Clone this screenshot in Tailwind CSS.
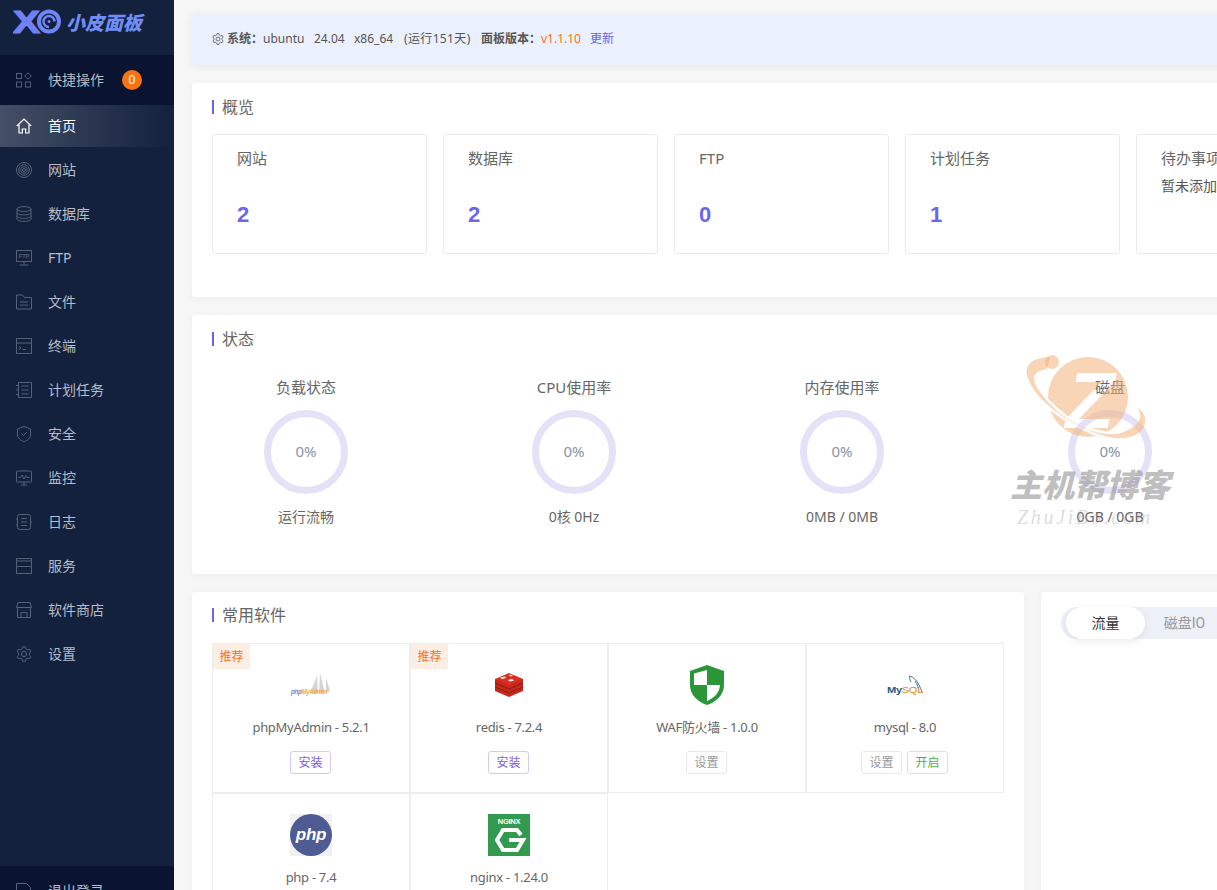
<!DOCTYPE html>
<html lang="zh-CN">
<head>
    <meta charset="UTF-8">
    <meta name="viewport" content="width=device-width, initial-scale=1.0">
    <title>小皮面板</title>
    <script src="https://cdn.jsdelivr.net/npm/@tailwindcss/browser@4"></script>
</head>
<body class="bg-[#f6f6f7] font-['Noto_Sans','Noto_Sans_CJK_SC',sans-serif]">
<div class="relative flex h-[890px] w-[1217px] overflow-hidden">

    <!-- sidebar -->
    <aside class="flex h-[916px] w-[174px] shrink-0 flex-col bg-[#14213d] text-sm text-[#b4bdc9]">
        <div class="flex h-[55px] items-start pl-[13px] pt-[9px]">
            <svg width="49" height="26" viewBox="0 0 49 26" fill="none">
                <defs><linearGradient id="logoGrad" x1="0" y1="0" x2="1" y2="0"><stop offset="0" stop-color="#6d86f8"/><stop offset="1" stop-color="#6f7cf6"/></linearGradient></defs>
                <text x="0" y="24" font-size="32" font-weight="700" fill="url(#logoGrad)" stroke="#6d84f7" stroke-width="1.200" font-family="Liberation Sans" textLength="27" lengthAdjust="spacingAndGlyphs">X</text>
                <circle cx="36" cy="12.500" r="10" stroke="#6f86f6" stroke-width="4"/>
                <path d="M36 18a5.500 5.500 0 1 1 5.500-5.500" stroke="#6f86f6" stroke-width="2.500"/>
                <circle cx="36" cy="12.500" r="1.500" fill="#6f86f6"/>
            </svg>
            <span class="mt-[2px] ml-[4px] text-[19px] leading-[24px] font-black text-[#6f8df5] italic">小皮面板</span>
        </div>
        <a class="flex h-[50px] items-center bg-[#0a1330] pl-[16px]">
            <svg class="mr-[16px]" width="16" height="16" viewBox="0 0 16 16" fill="none" stroke="#566178" stroke-width="1"><rect x="0.500" y="1.500" width="5" height="5"/><path d="M12 .800 15.300 4 12 7.200 8.700 4Z"/><rect x="0.500" y="10" width="5" height="5"/><rect x="9.500" y="10" width="5" height="5"/></svg>
            <span>快捷操作</span>
            <span class="ml-[18px] flex size-5 items-center justify-center rounded-full bg-[#f97316] text-xs text-white">0</span>
        </a>
        <a class="flex h-[42px] items-center bg-gradient-to-r from-[#454f66] to-[#14213d] pl-[16px] text-white">
            <svg class="mr-[16px]" width="16" height="16" viewBox="0 0 16 16" fill="none" stroke="#ffffff" stroke-width="1.200"><path d="M.800 8 8 1l7.200 7M3 6.500V15h3.300v-4h3.400v4H13V6.500"/></svg>
            <span>首页</span>
        </a>
        <nav class="flex flex-col pt-px">
            <a class="flex h-11 items-center pl-[16px]">
                <svg class="mr-[16px]" width="16" height="16" viewBox="0 0 16 16" fill="none" stroke="#566178"><circle cx="8" cy="8" r="7.500"/><circle cx="8" cy="8" r="5.300"/><circle cx="8" cy="8" r="3.400"/><circle cx="8" cy="8" r="1.500"/></svg>
                <span>网站</span>
            </a>
            <a class="flex h-11 items-center pl-[16px]">
                <svg class="mr-[16px]" width="16" height="16" viewBox="0 0 16 16" fill="none" stroke="#566178"><ellipse cx="8" cy="3" rx="7" ry="2.400"/><path d="M1 3v10c0 1.300 3.100 2.400 7 2.400s7-1.100 7-2.400V3M1 6.500c0 1.300 3.100 2.400 7 2.400s7-1.100 7-2.400M1 10c0 1.300 3.100 2.400 7 2.400s7-1.100 7-2.400"/></svg>
                <span>数据库</span>
            </a>
            <a class="flex h-11 items-center pl-[16px]">
                <svg class="mr-[16px]" width="16" height="16" viewBox="0 0 16 16" fill="none" stroke="#566178"><rect x="0.500" y="0.500" width="15" height="11"/><path d="M8 11.500v3M3.500 15h9"/><text x="8" y="8" text-anchor="middle" font-size="5.500" font-weight="700" fill="#566178" stroke="none" font-family="Liberation Sans">FTP</text></svg>
                <span>FTP</span>
            </a>
            <a class="flex h-11 items-center pl-[16px]">
                <svg class="mr-[16px]" width="16" height="16" viewBox="0 0 16 16" fill="none" stroke="#566178"><path d="M.500 1h6l2 2.500h7V15H.500ZM4 8h8M4 11h8"/></svg>
                <span>文件</span>
            </a>
            <a class="flex h-11 items-center pl-[16px]">
                <svg class="mr-[16px]" width="16" height="16" viewBox="0 0 16 16" fill="none" stroke="#566178"><rect x="0.500" y="0.500" width="15" height="15"/><path d="M.500 5h15M3 8.500l2 1.500-2 1.500M6.500 11.500h3.500"/></svg>
                <span>终端</span>
            </a>
            <a class="flex h-11 items-center pl-[16px]">
                <svg class="mr-[16px]" width="16" height="16" viewBox="0 0 16 16" fill="none" stroke="#566178"><path d="M2.500 .500h13v15h-13V.500M0 3.500h3M0 8h3M0 12.500h3M5.500 4h7M5.500 8h7M5.500 12h7"/></svg>
                <span>计划任务</span>
            </a>
            <a class="flex h-11 items-center pl-[16px]">
                <svg class="mr-[16px]" width="16" height="16" viewBox="0 0 16 16" fill="none" stroke="#566178"><path d="M8 .500 14.500 3v6c0 3-3 5.500-6.500 6.500C4.500 14.500 1.500 12 1.500 9V3ZM5.500 7.500l2 2 3.500-3.500"/></svg>
                <span>安全</span>
            </a>
            <a class="flex h-11 items-center pl-[16px]">
                <svg class="mr-[16px]" width="16" height="16" viewBox="0 0 16 16" fill="none" stroke="#566178"><rect x="0.500" y="1" width="15" height="11" rx="1"/><path d="M5 15h6M8 12v3M2.500 7.500h2l1.500-2.500 2 4 2-3.500 1 2h2.500"/></svg>
                <span>监控</span>
            </a>
            <a class="flex h-11 items-center pl-[16px]">
                <svg class="mr-[16px]" width="16" height="16" viewBox="0 0 16 16" fill="none" stroke="#566178"><rect x="1.500" y="0.500" width="13" height="15" rx="2"/><path d="M5 4.500h6M5 8h6M5 11.500h6M0 5h2M0 11h2M14 8h2"/></svg>
                <span>日志</span>
            </a>
            <a class="flex h-11 items-center pl-[16px]">
                <svg class="mr-[16px]" width="16" height="16" viewBox="0 0 16 16" fill="none" stroke="#566178"><rect x="0.500" y="0.500" width="15" height="15"/><path d="M.500 3h15M.500 8.500h15"/></svg>
                <span>服务</span>
            </a>
            <a class="flex h-11 items-center pl-[16px]">
                <svg class="mr-[16px]" width="16" height="16" viewBox="0 0 16 16" fill="none" stroke="#566178"><path d="M2 .500h12L15.500 5.500H.500ZM1.500 5.500v10h13v-10M5 15.500v-5h6v5"/></svg>
                <span>软件商店</span>
            </a>
            <a class="flex h-11 items-center pl-[16px]">
                <svg class="mr-[16px]" width="16" height="16" viewBox="0 0 16 16" fill="none" stroke="#566178"><circle cx="8" cy="8" r="2.600"/><path d="M6.700 .800h2.600l.5 2 1.700 1 2-.600 1.300 2.300-1.500 1.400v2.200l1.500 1.400-1.300 2.300-2-.600-1.700 1-.5 2H6.700l-.5-2-1.700-1-2 .600-1.300-2.300 1.500-1.400V6.900L1.200 5.500l1.300-2.300 2 .600 1.700-1Z"/></svg>
                <span>设置</span>
            </a>
        </nav>
        <a class="mt-auto flex h-[50px] items-center bg-[#0a1330] pl-[16px]">
            <svg class="mr-[16px]" width="16" height="16" viewBox="0 0 16 16" fill="none" stroke="#566178"><path d="M.500 15.500V.500h10l4 4v11"/></svg>
            <span>退出登录</span>
        </a>
    </aside>

    <!-- main -->
    <main class="w-[1300px] shrink-0 pt-[13px] pl-[18px] text-[#666]">
        <div class="mb-[18px] flex h-[52px] items-center rounded-[3px] bg-[#eaf0fd] pl-[20px] text-xs text-[#555] shadow-[0_2px_8px_rgba(0,0,0,0.06)]">
            <svg class="mr-[3px]" width="12" height="12" viewBox="0 0 16 16" fill="none" stroke="#666" stroke-width="1.200"><circle cx="8" cy="8" r="2.600"/><path d="M6.700 .800h2.600l.5 2 1.700 1 2-.600 1.300 2.300-1.500 1.400v2.200l1.500 1.400-1.300 2.300-2-.600-1.700 1-.5 2H6.700l-.5-2-1.700-1-2 .600-1.300-2.300 1.500-1.400V6.900L1.200 5.500l1.300-2.300 2 .600 1.700-1Z"/></svg>
            <b class="w-[36px] shrink-0 font-bold">系统：</b>
            <span class="w-[51px]">ubuntu</span>
            <span class="w-[40px]">24.04</span>
            <span class="w-[50px]">x86_64</span>
            <span class="w-[77px] tracking-[0.35px]">(运行151天)</span>
            <b class="w-[60px] shrink-0 font-bold">面板版本：</b>
            <span class="w-[49px] text-[#f97316]">v1.1.10</span>
            <a class="text-[#6c63e8]">更新</a>
        </div>

        <section class="mb-[18px] h-[214px] rounded-[3px] bg-white px-[20px] shadow-[0_2px_8px_rgba(0,0,0,0.04)]">
            <h2 class="mb-[3px] flex h-[48px] items-center text-base font-normal text-[#666]"><i class="mr-[8px] h-[14px] w-[2px] bg-[#6c63e8]"></i>概览</h2>
            <div class="flex gap-4">
                <div class="h-[120px] w-[215px] shrink-0 rounded-[3px] border border-[#ebebeb] pt-[11px] pl-[24px]">
                    <p class="text-[15px] leading-[24px]">网站</p>
                    <p class="mt-[30px] font-['Liberation_Sans',sans-serif] text-[22px] leading-[30px] font-bold text-[#6c66ee]">2</p>
                </div>
                <div class="h-[120px] w-[215px] shrink-0 rounded-[3px] border border-[#ebebeb] pt-[11px] pl-[24px]">
                    <p class="text-[15px] leading-[24px]">数据库</p>
                    <p class="mt-[30px] font-['Liberation_Sans',sans-serif] text-[22px] leading-[30px] font-bold text-[#6c66ee]">2</p>
                </div>
                <div class="h-[120px] w-[215px] shrink-0 rounded-[3px] border border-[#ebebeb] pt-[11px] pl-[24px]">
                    <p class="text-[15px] leading-[24px]">FTP</p>
                    <p class="mt-[30px] font-['Liberation_Sans',sans-serif] text-[22px] leading-[30px] font-bold text-[#6c66ee]">0</p>
                </div>
                <div class="h-[120px] w-[215px] shrink-0 rounded-[3px] border border-[#ebebeb] pt-[11px] pl-[24px]">
                    <p class="text-[15px] leading-[24px]">计划任务</p>
                    <p class="mt-[30px] font-['Liberation_Sans',sans-serif] text-[22px] leading-[30px] font-bold text-[#6c66ee]">1</p>
                </div>
                <div class="h-[120px] w-[215px] shrink-0 rounded-[3px] border border-[#ebebeb] pt-[11px] pl-[24px]">
                    <p class="text-[15px] leading-[24px]">待办事项</p>
                    <p class="mt-[6px] text-sm leading-[20px] text-[#555]">暂未添加</p>
                </div>
            </div>
        </section>

        <section class="mb-[18px] h-[259px] rounded-[3px] bg-white px-[20px] shadow-[0_2px_8px_rgba(0,0,0,0.04)]">
            <h2 class="flex h-[48px] items-center text-base font-normal text-[#666]"><i class="mr-[8px] h-[14px] w-[2px] bg-[#6c63e8]"></i>状态</h2>
            <div class="grid grid-cols-[repeat(4,188px)] gap-x-20 pt-[12px] text-center">
                <div class="flex flex-col items-center">
                    <p class="text-[15px] leading-[24px]">负载状态</p>
                    <div class="mt-[11px] flex size-[84px] items-center justify-center rounded-full border-[7px] border-[#e5e2f8] pb-[2px] text-[15px] text-[#8a93a6]">0%</div>
                    <p class="mt-[11px] text-sm leading-[24px]">运行流畅</p>
                </div>
                <div class="flex flex-col items-center">
                    <p class="text-[15px] leading-[24px]">CPU使用率</p>
                    <div class="mt-[11px] flex size-[84px] items-center justify-center rounded-full border-[7px] border-[#e5e2f8] pb-[2px] text-[15px] text-[#8a93a6]">0%</div>
                    <p class="mt-[11px] text-sm leading-[24px]">0核 0Hz</p>
                </div>
                <div class="flex flex-col items-center">
                    <p class="text-[15px] leading-[24px]">内存使用率</p>
                    <div class="mt-[11px] flex size-[84px] items-center justify-center rounded-full border-[7px] border-[#e5e2f8] pb-[2px] text-[15px] text-[#8a93a6]">0%</div>
                    <p class="mt-[11px] text-sm leading-[24px]">0MB / 0MB</p>
                </div>
                <div class="flex flex-col items-center">
                    <p class="text-[15px] leading-[24px]">磁盘</p>
                    <div class="mt-[11px] flex size-[84px] items-center justify-center rounded-full border-[7px] border-[#e5e2f8] pb-[2px] text-[15px] text-[#8a93a6]">0%</div>
                    <p class="mt-[11px] text-sm leading-[24px]">0GB / 0GB</p>
                </div>
            </div>
        </section>

        <div class="flex gap-[17px]">
            <section class="h-[400px] w-[832px] shrink-0 rounded-[3px] bg-white px-[20px] shadow-[0_2px_8px_rgba(0,0,0,0.04)]">
                <h2 class="mb-[5px] flex h-[46px] items-center text-base font-normal text-[#666]"><i class="mr-[8px] h-[14px] w-[2px] bg-[#6c63e8]"></i>常用软件</h2>
                <div class="grid grid-cols-[repeat(4,198px)] text-center text-[13px] tracking-[-0.3px]">
                    <div class="relative flex h-[150px] flex-col items-center border border-[#eeeeee] pt-[20px]">
                        <span class="absolute top-0 left-0 flex h-[25px] w-[37px] items-center justify-center bg-[#fdeee3] text-xs tracking-normal text-[#f97316]">推荐</span>
                        <svg width="42" height="42" viewBox="0 0 42 42">
                            <path d="M20 29 27 12l1 17ZM29 29l1-20 5 20ZM36 29l0-15 4 13Z" fill="#d4d4d6"/>
                            <text x="1" y="30" font-size="6.500" font-style="italic" font-weight="700" fill="#7b86c4" font-family="Liberation Sans" textLength="36" lengthAdjust="spacingAndGlyphs">php<tspan fill="#f5a83a">MyAdmin</tspan></text>
                        </svg>
                        <p class="mt-[11px] leading-[20px]">phpMyAdmin - 5.2.1</p>
                        <div class="mt-[14px] flex justify-center gap-[5px] pr-px tracking-normal">
                            <a class="flex h-[23px] w-[41px] items-center justify-center rounded-[3px] border border-[#d5c8f8] text-xs text-[#7c5ce7]">安装</a>
                        </div>
                    </div>
                    <div class="relative flex h-[150px] flex-col items-center border border-[#eeeeee] pt-[20px]">
                        <span class="absolute top-0 left-0 flex h-[25px] w-[37px] items-center justify-center bg-[#fdeee3] text-xs tracking-normal text-[#f97316]">推荐</span>
                        <svg width="42" height="42" viewBox="0 0 42 42">
                            <path d="M7 15v12l14 6 14-6V15Z" fill="#c6281c"/>
                            <path d="M7 19l14 6 14-6M7 23l14 6 14-6" fill="none" stroke="#8f1a12" stroke-width="1"/>
                            <path d="M21 9 35 15 21 21 7 15Z" fill="#d9301f"/>
                            <path d="M12 13.500l5-1 1 1.500-4 1ZM20 16l4-1 2 1.500-4 1ZM22 10.500l3 1-2 1-2-1Z" fill="#fff"/>
                        </svg>
                        <p class="mt-[11px] leading-[20px]">redis - 7.2.4</p>
                        <div class="mt-[14px] flex justify-center gap-[5px] pr-px tracking-normal">
                            <a class="flex h-[23px] w-[41px] items-center justify-center rounded-[3px] border border-[#d5c8f8] text-xs text-[#7c5ce7]">安装</a>
                        </div>
                    </div>
                    <div class="relative flex h-[150px] flex-col items-center border border-[#eeeeee] pt-[20px]">
                        <svg width="42" height="42" viewBox="0 0 42 42">
                            <path d="M21 1 38 7v14c0 10-8 17-17 20C12 38 4 31 4 21V7Z" fill="#2a9638"/>
                            <path d="M21 6v15H8V9.500ZM21 21h13c-.5 8-6 13-13 16Z" fill="#fff"/>
                        </svg>
                        <p class="mt-[11px] leading-[20px]">WAF防火墙 - 1.0.0</p>
                        <div class="mt-[14px] flex justify-center gap-[5px] pr-px tracking-normal">
                            <a class="flex h-[23px] w-[41px] items-center justify-center rounded-[3px] border border-[#e6e8ec] text-xs text-[#999]">设置</a>
                        </div>
                    </div>
                    <div class="relative flex h-[150px] flex-col items-center border border-[#eeeeee] pt-[20px]">
                        <svg width="42" height="42" viewBox="0 0 42 42" fill="none">
                            <path d="M25 12c5 1 9 5 13 16M27 18c-2-3-1-6-2-6M31 17c2 3 3 5 3 7" stroke="#3a7a95" stroke-width="1"/>
                            <text x="3" y="29" font-size="9.500" font-weight="700" fill="#1d5d80" font-family="Liberation Sans" textLength="36" lengthAdjust="spacingAndGlyphs">My<tspan fill="#d98a1f" font-weight="400">SQL</tspan></text>
                        </svg>
                        <p class="mt-[11px] leading-[20px]">mysql - 8.0</p>
                        <div class="mt-[14px] flex justify-center gap-[5px] pr-px tracking-normal">
                            <a class="flex h-[23px] w-[41px] items-center justify-center rounded-[3px] border border-[#e6e8ec] text-xs text-[#999]">设置</a>
                            <a class="flex h-[23px] w-[41px] items-center justify-center rounded-[3px] border border-[#c9eec4] text-xs text-[#4cae4c]">开启</a>
                        </div>
                    </div>
                    <div class="relative flex h-[150px] flex-col items-center border border-[#eeeeee] pt-[20px]">
                        <svg width="42" height="42" viewBox="0 0 42 42">
                            <rect width="42" height="42" fill="#f1f1f1"/>
                            <circle cx="21" cy="21" r="21" fill="#4f5b93"/>
                            <text x="21" y="26" text-anchor="middle" font-size="17" font-style="italic" font-weight="700" fill="#fff" font-family="Liberation Sans">php</text>
                        </svg>
                        <p class="mt-[11px] leading-[20px]">php - 7.4</p>
                    </div>
                    <div class="relative flex h-[150px] flex-col items-center border border-[#eeeeee] pt-[20px]">
                        <svg width="42" height="42" viewBox="0 0 42 42" fill="none">
                            <rect width="42" height="42" fill="#329a4f"/>
                            <text x="21" y="9.500" text-anchor="middle" font-size="7.500" font-weight="700" fill="#fff" font-family="Liberation Sans">NGINX</text>
                            <path d="M33 21l-4-5H15L9 26l6 10h14l6-10H21" stroke="#fff" stroke-width="4"/>
                        </svg>
                        <p class="mt-[11px] leading-[20px]">nginx - 1.24.0</p>
                    </div>
                </div>
            </section>

            <section class="h-[400px] w-[400px] shrink-0 rounded-[3px] bg-white pt-[15px] pl-[20px] shadow-[0_2px_8px_rgba(0,0,0,0.04)]">
                <div class="flex h-[32px] w-[300px] rounded-full bg-[#edf0f6] pl-[5px]">
                    <span class="flex h-[32px] w-[79px] items-center justify-center rounded-full bg-white pb-px text-sm text-[#333] shadow-[0_3px_8px_rgba(0,0,0,0.08)]">流量</span>
                    <span class="flex h-[32px] w-[79px] items-center justify-center pb-px font-['Roboto','Noto_Sans_CJK_SC',sans-serif] text-sm text-[#999]">磁盘IO</span>
                </div>
            </section>
        </div>
    </main>

    <!-- watermark -->
    <div class="pointer-events-none absolute top-[350px] left-[1005px] h-[185px] w-[180px]">
        <svg class="absolute top-0 left-0" width="180" height="130" viewBox="0 0 180 130" fill="none">
            <defs>
                <mask id="wmCut">
                    <rect width="180" height="130" fill="#fff"/>
                    <text x="85" y="78" text-anchor="middle" font-size="80" font-weight="700" font-style="italic" fill="#000" font-family="Liberation Sans">Z</text>
                    <path d="M45 7C30 8 20 12 22 25c4 20 38 50 78 61 20 6 40-1 40-14 1-7-3-12-8-14 6 7 6 19-20 26-25 3-60-17-77-42-8-12-10-20 7-23Z" fill="#000" stroke="#000" stroke-width="5"/>
                </mask>
            </defs>
            <circle cx="83" cy="47" r="40" fill="#f2b27a" fill-opacity="0.55" mask="url(#wmCut)"/>
            <path d="M45 7C30 8 20 12 22 25c4 20 38 50 78 61 20 6 40-1 40-14 1-7-3-12-8-14 6 7 6 19-20 26-25 3-60-17-77-42-8-12-10-20 7-23Z" fill="#f2b27a" fill-opacity="0.55"/>
            <circle cx="47" cy="12" r="7" fill="#f2b27a" fill-opacity="0.55"/>
        </svg>
        <p class="absolute top-[116px] left-[5px] text-[32px] leading-[38px] font-black whitespace-nowrap text-[#999]/65 italic">主机帮博客</p>
        <p class="absolute top-[155px] left-[12px] font-['Liberation_Serif',serif] text-[20px] leading-[24px] tracking-[2.700px] whitespace-nowrap text-[#999]/35 italic">ZhuJiBo.com</p>
    </div>
</div>
</body>
</html>
